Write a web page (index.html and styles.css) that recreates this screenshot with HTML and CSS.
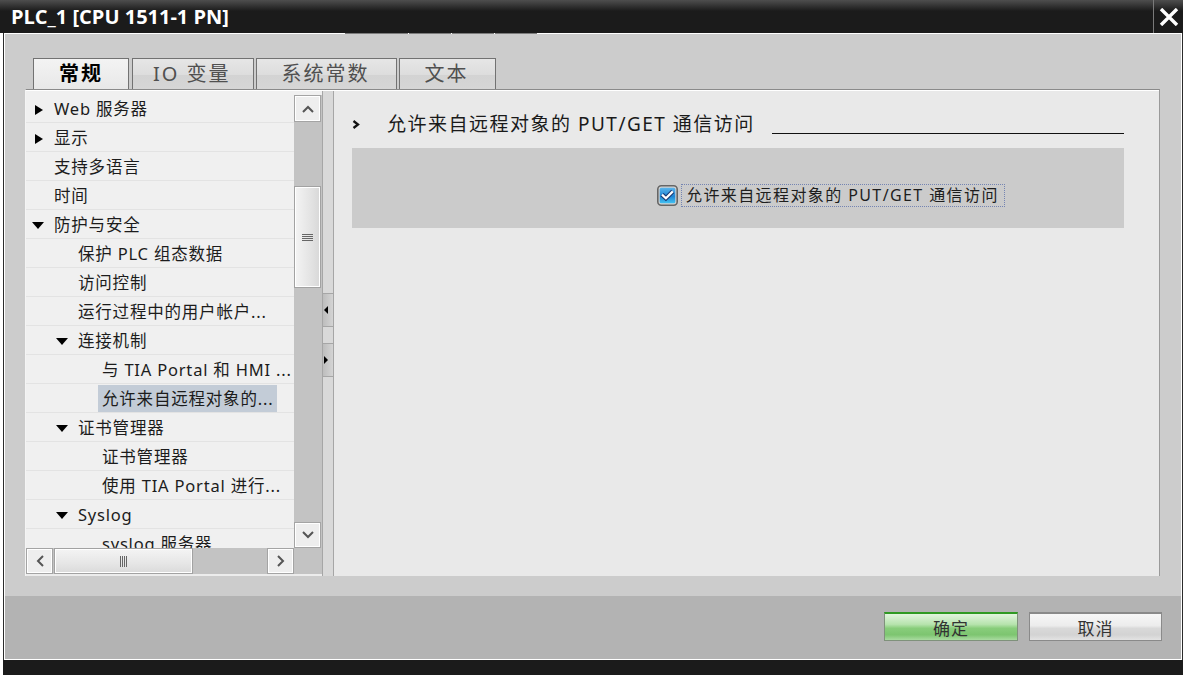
FILE: index.html
```html
<!DOCTYPE html>
<html lang="zh-CN">
<head>
  <meta charset="UTF-8" />
  <meta name="viewport" content="width=device-width, initial-scale=1" />
  <title>PLC_1 [CPU 1511-1 PN]</title>
  <link rel="stylesheet" href="styles.css">
</head>
<body>
  <div class="window">
    <!-- Title bar -->
    <div class="titlebar">
      <p>PLC_1 [CPU 1511-1 PN]</p>
      <div class="close-button">
        <svg width="20" height="18" viewBox="0 0 20 18"><path d="M2 1 L18 17 M18 1 L2 17" stroke="#fff" stroke-width="3.4" /></svg>
      </div>
    </div>

    <div class="dialog">
      <div class="menu-line"><span></span><span></span><span></span><span></span></div>

      <!-- Tabs -->
      <div class="tabs">
        <div class="tab active">常规</div>
        <div class="tab tab-latin">IO 变量</div>
        <div class="tab">系统常数</div>
        <div class="tab">文本</div>
      </div>

      <div class="panel">
        <!-- Navigation tree -->
        <div class="tree-col">
          <div class="tree-area">
            <ul class="tree">
              <li class="lvl-0"><i class="toggle closed"></i><span class="label">Web 服务器</span></li>
              <li class="lvl-0"><i class="toggle closed"></i><span class="label">显示</span></li>
              <li class="lvl-0"><i class="toggle"></i><span class="label">支持多语言</span></li>
              <li class="lvl-0"><i class="toggle"></i><span class="label">时间</span></li>
              <li class="lvl-0"><i class="toggle open"></i><span class="label">防护与安全</span></li>
              <li class="lvl-1"><i class="toggle"></i><span class="label">保护 PLC 组态数据</span></li>
              <li class="lvl-1"><i class="toggle"></i><span class="label">访问控制</span></li>
              <li class="lvl-1"><i class="toggle"></i><span class="label">运行过程中的用户帐户...</span></li>
              <li class="lvl-1"><i class="toggle open"></i><span class="label">连接机制</span></li>
              <li class="lvl-2"><i class="toggle"></i><span class="label">与 TIA Portal 和 HMI ...</span></li>
              <li class="lvl-2 selected"><i class="toggle"></i><span class="label">允许来自远程对象的...</span></li>
              <li class="lvl-1"><i class="toggle open"></i><span class="label">证书管理器</span></li>
              <li class="lvl-2"><i class="toggle"></i><span class="label">证书管理器</span></li>
              <li class="lvl-2"><i class="toggle"></i><span class="label">使用 TIA Portal 进行...</span></li>
              <li class="lvl-1"><i class="toggle open"></i><span class="label">Syslog</span></li>
              <li class="lvl-2"><i class="toggle"></i><span class="label">syslog 服务器</span></li>
            </ul>

            <div class="vscroll">
              <div class="sb-btn v-btn">
                <svg width="12" height="8" viewBox="0 0 12 8"><polyline points="1,7 6,2 11,7" fill="none" stroke="#555" stroke-width="2" /></svg>
              </div>
              <div class="sb-gap-top"></div>
              <div class="sb-thumb v-thumb"><span class="grip-h"></span></div>
              <div class="sb-fill"></div>
              <div class="sb-btn v-btn down">
                <svg width="12" height="8" viewBox="0 0 12 8"><polyline points="1,1 6,6 11,1" fill="none" stroke="#555" stroke-width="2" /></svg>
              </div>
            </div>
          </div>

          <div class="hscroll">
            <div class="sb-btn h-btn">
              <svg width="8" height="12" viewBox="0 0 8 12"><polyline points="7,1 2,6 7,11" fill="none" stroke="#555" stroke-width="2" /></svg>
            </div>
            <div class="sb-thumb h-thumb"><span class="grip-v"></span></div>
            <div class="sb-fill"></div>
            <div class="sb-btn h-btn">
              <svg width="8" height="12" viewBox="0 0 8 12"><polyline points="1,1 6,6 1,11" fill="none" stroke="#555" stroke-width="2" /></svg>
            </div>
            <div class="sb-corner"></div>
          </div>
        </div>

        <!-- Splitter -->
        <div class="splitter">
          <div class="split-btn first"><i class="arrow-left"></i></div>
          <div class="split-btn"><i class="arrow-right"></i></div>
        </div>

        <!-- Settings -->
        <div class="content">
          <div class="heading">
            <span class="chevron">
              <svg width="8" height="9" viewBox="0 0 8 9"><polyline points="1.5,1 6,4.5 1.5,8" fill="none" stroke="#111" stroke-width="2.3" /></svg>
            </span>
            <h3>允许来自远程对象的 PUT/GET 通信访问</h3>
            <span class="rule"></span>
          </div>

          <div class="option-box">
            <div class="check-row">
              <svg width="21" height="21" viewBox="0 0 21 21">
                <defs>
                  <linearGradient id="cbFill" x1="0" y1="0" x2="0" y2="1">
                    <stop offset="0" stop-color="#5cb6ec" />
                    <stop offset="0.55" stop-color="#1c84d3" />
                    <stop offset="1" stop-color="#44c2f2" />
                  </linearGradient>
                </defs>
                <rect x="0.8" y="0.8" width="19.4" height="19.4" rx="3.5" fill="#d2d2d2" stroke="#666666" stroke-width="1.6" />
                <rect x="2.7" y="2.7" width="15.6" height="15.6" rx="1.5" fill="url(#cbFill)" />
                <path d="M5 9.6 L8.9 13.2 L15.8 6.4" fill="none" stroke="#173670" stroke-width="4.4" />
                <path d="M5 9.6 L8.9 13.2 L15.8 6.4" fill="none" stroke="#ffffff" stroke-width="2.2" />
              </svg>
              <span class="check-label">允许来自远程对象的 PUT/GET 通信访问</span>
            </div>
          </div>
        </div>
      </div>

      <!-- Buttons -->
      <div class="footer">
        <button class="btn btn-ok">确定</button>
        <button class="btn btn-cancel">取消</button>
      </div>
    </div>

    <div class="bottombar"></div>
  </div>
</body>
</html>
```

FILE: styles.css
```css
/* Base */
* {
  box-sizing: border-box;
}

body {
  margin: 0;
  background: #ffffff;
  font-family: "Noto Sans", "Noto Sans CJK SC", sans-serif;
  color: #1e1e1e;
}

.window {
  width: 1183px;
}

/* Title bar */
.titlebar {
  height: 33px;
  display: flex;
  align-items: center;
  justify-content: space-between;
  background: linear-gradient(#4e4e4e, #1b1b1b 11px, #1b1b1b);
}

.titlebar p {
  margin: 0 0 0 11px;
  font-family: "Open Sans", sans-serif;
  font-weight: 700;
  font-size: 20px;
  color: #ffffff;
}

.close-button {
  width: 30px;
  height: 33px;
  border-left: 1px solid #7a7a7a;
  display: flex;
  align-items: center;
  justify-content: center;
}

/* Dialog body */
.dialog {
  margin-left: 3px;
  border-left: 1px solid #2b2b2b;
  border-right: 1px solid #2b2b2b;
  background: #cccccc;
  box-shadow: inset 1px 0 #ffffff, inset -1px 0 #ffffff;
}

.menu-line {
  height: 1px;
  display: flex;
  gap: 1px;
  padding-left: 341px;
  background: #ffffff;
}

.menu-line span {
  width: 42px;
  background: #7c7c7c;
}

.menu-line span:first-child {
  width: 63px;
}

/* Tabs */
.tabs {
  display: flex;
  margin-top: 24px;
  padding-left: 29px;
  height: 31px;
}

.tab {
  padding: 0 26px 0 25px;
  margin-right: 2px;
  border: 1px solid #727272;
  border-bottom: none;
  font-size: 20px;
  line-height: 29px;
  letter-spacing: 2px;
  color: #505050;
  background: linear-gradient(#e6e6e6, #dddddd 52%, #d3d3d3 54%, #d6d6d6);
  white-space: nowrap;
}

.tab-latin {
  padding: 0 22px 0 20px;
}

.tab.active {
  margin-right: 3px;
  padding: 0 25px;
  font-weight: 700;
  color: #000000;
  background: linear-gradient(#f3f3f3, #e8e8e8);
}

/* Main panel */
.panel {
  margin-left: 21px;
  width: 1135px;
  height: 487px;
  display: flex;
  border-top: 1px solid #8a8a8a;
  border-left: 1px solid #f4f4f4;
  border-right: 1px solid #9a9a9a;
  padding-top: 1px;
  background: #ffffff;
}

.tree-col {
  width: 296px;
  display: flex;
  flex-direction: column;
  padding-bottom: 2px;
  background: #ececec;
}

.tree-area {
  flex: 1;
  display: flex;
  min-height: 0;
}

.tree {
  width: 268px;
  margin: 0;
  padding: 3px 0 0;
  list-style: none;
  overflow: hidden;
  background: #f0f0f0;
}

.tree li {
  height: 29px;
  display: flex;
  align-items: center;
  border-bottom: 1px solid #e3e3e3;
  font-size: 16.5px;
  letter-spacing: 0.8px;
  white-space: nowrap;
  color: #1c1c1c;
}

.lvl-0 { padding-left: 6px; }
.lvl-1 { padding-left: 30px; }
.lvl-2 { padding-left: 54px; }

.toggle {
  width: 22px;
  height: 14px;
  flex: none;
  display: flex;
  align-items: center;
}

.toggle.closed::before {
  content: "";
  margin: 4px 0 0 3px;
  border-top: 5px solid transparent;
  border-bottom: 5px solid transparent;
  border-left: 8px solid #000000;
}

.toggle.open::before {
  content: "";
  margin-top: 2px;
  border-left: 6px solid transparent;
  border-right: 6px solid transparent;
  border-top: 7px solid #000000;
}

.label {
  padding: 0 4px;
  margin-left: -4px;
  line-height: 27px;
}

.selected .label {
  background: #c3ccd7;
}

/* Scroll bars */
.vscroll {
  width: 28px;
  display: flex;
  flex-direction: column;
  border-top: 4px solid #f0f0f0;
  background: #c3c3c3;
}

.sb-btn {
  display: flex;
  align-items: center;
  justify-content: center;
  border: 1px solid #a4a4a4;
  box-shadow: inset 0 0 0 1px #ffffff;
  background: #eeeeee;
}

.v-btn {
  height: 27px;
  width: 27px;
}

.v-btn.down {
  height: 26px;
}

.sb-gap-top {
  height: 64px;
}

.sb-fill {
  flex: 1;
}

.sb-thumb {
  display: flex;
  align-items: center;
  justify-content: center;
  border: 1px solid #a2a2a2;
  box-shadow: inset 0 0 0 1px #ffffff;
  background: linear-gradient(90deg, #f4f4f4, #e4e4e4 60%, #d8d8d8);
}

.v-thumb {
  width: 27px;
  height: 102px;
}

.grip-h {
  width: 11px;
  height: 7px;
  background: repeating-linear-gradient(#666666 0 1px, transparent 1px 2px);
}

.hscroll {
  height: 26px;
  display: flex;
  background: #c3c3c3;
}

.h-btn {
  width: 27px;
}

.h-thumb {
  width: 139px;
  margin-left: 1px;
  background: linear-gradient(#f4f4f4, #e6e6e6 60%, #dadada);
}

.grip-v {
  width: 7px;
  height: 11px;
  background: repeating-linear-gradient(90deg, #666666 0 1px, transparent 1px 2px);
}

.sb-corner {
  width: 28px;
}

/* Splitter */
.splitter {
  width: 12px;
  border-left: 1px solid #a6a6a6;
  border-right: 1px solid #a6a6a6;
  background: #d9d9d9;
}

.split-btn {
  height: 34px;
  margin-top: 16px;
  display: flex;
  align-items: center;
  padding-left: 1px;
  border-top: 1px solid #a6a6a6;
  border-bottom: 1px solid #a6a6a6;
  background: linear-gradient(90deg, #bdbdbd, #d4d4d4);
}

.split-btn.first {
  margin-top: 202px;
}

.arrow-left {
  border-top: 4px solid transparent;
  border-bottom: 4px solid transparent;
  border-right: 4px solid #000000;
}

.arrow-right {
  border-top: 4px solid transparent;
  border-bottom: 4px solid transparent;
  border-left: 4px solid #000000;
}

/* Content pane */
.content {
  flex: 1;
  padding: 20px 35px 0 18px;
  background: #e9e9e9;
}

.heading {
  display: flex;
  align-items: flex-start;
  height: 26px;
}

.chevron {
  width: 35px;
  height: 26px;
  display: flex;
  align-items: center;
  flex: none;
}

.heading h3 {
  margin: 0;
  font-size: 19px;
  font-weight: 400;
  line-height: 26px;
  letter-spacing: 1.5px;
  white-space: nowrap;
  color: #1a1a1a;
}

.rule {
  flex: 1;
  height: 23px;
  margin-left: 17px;
  border-bottom: 1px solid #111111;
}

.option-box {
  margin-top: 11px;
  height: 80px;
  padding: 36px 0 0 305px;
  background: #cbcbcb;
}

.check-row {
  display: flex;
  align-items: center;
  gap: 3px;
}

.check-label {
  height: 23px;
  padding: 0 5px 0 4px;
  border: 1px dotted #7484b2;
  font-size: 16px;
  line-height: 21px;
  letter-spacing: 1.4px;
  white-space: nowrap;
  color: #1e1e1e;
}

/* Footer */
.footer {
  margin: 20px 1px 0;
  height: 64px;
  display: flex;
  justify-content: flex-end;
  gap: 11px;
  padding: 16px 19px 0 0;
  border-bottom: 1px solid #ffffff;
  background: #b3b3b3;
}

.btn {
  width: 133px;
  height: 29px;
  padding: 0;
  font-family: "Noto Sans", "Noto Sans CJK SC", sans-serif;
  font-size: 17px;
  letter-spacing: 1px;
  color: #333333;
  border: 1px solid #8a8a8a;
  border-top-width: 2px;
  background: linear-gradient(#f7f7f7, #ececec 45%, #d9d9d9 55%, #d3d3d3 80%, #e3e3e3);
}

.btn-ok {
  width: 134px;
  border-color: #7f917b;
  border-top-color: #2f9a22;
  background: linear-gradient(#e2f5de, #b6e3ad 40%, #88cd7b 55%, #7dc570 80%, #a9dba0);
}

.bottombar {
  height: 15px;
  margin-left: 3px;
  background: #1b1b1b;
}
```
